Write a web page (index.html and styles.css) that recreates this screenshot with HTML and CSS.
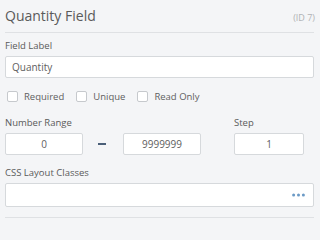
FILE: index.html
```html
<!DOCTYPE html>
<html>
<head>
<meta charset="utf-8">
<link rel="stylesheet" href="styles.css">
</head>
<body>
<div class="panel">
  <div class="header">
    <span class="title">Quantity Field</span>
    <span class="id">(ID 7)</span>
  </div>
  <div class="label first">Field Label</div>
  <div class="input text">Quantity</div>
  <div class="checks">
    <label class="check"><span class="box"></span>Required</label>
    <label class="check"><span class="box"></span>Unique</label>
    <label class="check"><span class="box"></span>Read Only</label>
  </div>
  <div class="range">
    <div class="label rlabel">Number Range</div>
    <div class="label slabel">Step</div>
    <div class="input num">0</div>
    <div class="dash"><span></span></div>
    <div class="input num">9999999</div>
    <div></div>
    <div class="input num">1</div>
  </div>
  <div class="label css">CSS Layout Classes</div>
  <div class="input tall">
    <svg class="dots" width="13" height="4" viewBox="0 0 13 4"><circle cx="1.6" cy="2" r="1.5"/><circle cx="6.5" cy="2" r="1.5"/><circle cx="11.4" cy="2" r="1.5"/></svg>
  </div>
  <div class="footer"></div>
</div>
</body>
</html>
```

FILE: styles.css
```css
html, body {
  margin: 0;
  padding: 0;
  background: #f4f5f7;
}
body {
  font-family: "Open Sans", "Noto Sans", sans-serif;
  color: #606060;
}
.panel {
  padding: 0 6px 0 5px;
  display: flex;
  flex-direction: column;
}
.header {
  display: flex;
  justify-content: space-between;
  align-items: baseline;
  padding: 6px 0 6px 0;
  border-bottom: 1px solid #dfe1e4;
}
.title {
  font-size: 14px;
  line-height: 20px;
  color: #5a5a5a;
}
.id {
  font-size: 9px;
  color: #b0b2b5;
  margin-right: -1px;
}
.label {
  font-size: 9.5px;
  line-height: 12px;
  color: #5a5a5a;
}
.label.first {
  margin-top: 7px;
}
.input {
  box-sizing: border-box;
  background: #fff;
  border: 1px solid #d6d9dc;
  border-radius: 2px;
  height: 22px;
  font-size: 10px;
  color: #606060;
  display: flex;
  align-items: center;
}
.input.text {
  margin-top: 4px;
  padding-left: 6px;
}
.checks {
  display: flex;
  margin-top: 12px;
  padding-left: 2px;
  height: 12px;
  align-items: center;
}
.check {
  display: flex;
  align-items: center;
  font-size: 9.5px;
  color: #606060;
  margin-right: 12px;
}
.box {
  box-sizing: border-box;
  width: 11px;
  height: 11px;
  border: 1px solid #c6c9cd;
  border-radius: 2px;
  background: #fff;
  margin-right: 6px;
}
.range {
  display: grid;
  grid-template-columns: 78px 40px 78px 33px 70px;
  grid-template-rows: 12px 22px;
  row-gap: 4px;
  margin-top: 15px;
}
.rlabel {
  grid-column: 1 / 4;
}
.slabel {
  grid-column: 5 / 6;
}
.num {
  justify-content: center;
}
.dash {
  display: flex;
  align-items: center;
  justify-content: center;
}
.dash span {
  display: block;
  width: 8px;
  height: 2px;
  background: #4a5f78;
  margin-left: -3px;
}
.label.css {
  margin-top: 12px;
}
.input.tall {
  margin-top: 4px;
  height: 24px;
  justify-content: flex-end;
  padding-right: 8px;
}
.dots {
  fill: #6b9ac6;
  display: block;
  margin-top: -1px;
}
.footer {
  margin-top: 10px;
  border-top: 1px solid #dfe1e4;
}
```
